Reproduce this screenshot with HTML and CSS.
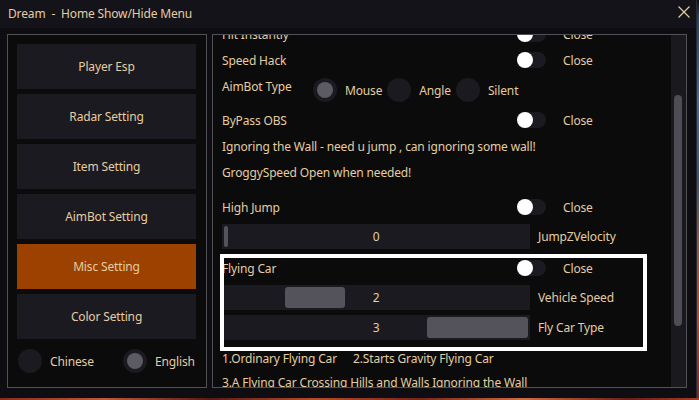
FILE: index.html
```html
<!DOCTYPE html>
<html lang="en">
<head>
    <meta charset="UTF-8">
    <meta name="viewport" content="width=device-width, initial-scale=1.0">
    <title>Dream - Home Show/Hide Menu</title>
    <link rel="stylesheet" href="styles.css">
</head>
<body>
    <div class="window">
        <div class="titlebar">
            <span class="title">Dream  -  Home Show/Hide Menu</span>
            <svg class="close" width="12" height="12" viewBox="0 0 12 12">
                <path d="M0.5 0.5 L11.5 11.5 M11.5 0.5 L0.5 11.5" stroke="#e4cda0" stroke-width="1.2" fill="none"/>
            </svg>
        </div>

        <div class="main">
            <div class="side">
                <div class="nav">
                    <div class="nav-btn">Player Esp</div>
                    <div class="nav-btn">Radar Setting</div>
                    <div class="nav-btn">Item Setting</div>
                    <div class="nav-btn">AimBot Setting</div>
                    <div class="nav-btn active">Misc Setting</div>
                    <div class="nav-btn">Color Setting</div>
                </div>
                <div class="lang">
                    <div class="radio"><span class="dot"></span>Chinese</div>
                    <div class="radio on"><span class="dot"></span>English</div>
                </div>
            </div>

            <div class="content">
                <div class="scroll-area">
                    <div class="list">
                        <div class="row">
                            <span class="label">Hit Instantly</span>
                            <span class="toggle"></span>
                            <span class="state">Close</span>
                        </div>
                        <div class="row">
                            <span class="label">Speed Hack</span>
                            <span class="toggle"></span>
                            <span class="state">Close</span>
                        </div>
                        <div class="row choice">
                            <span class="choice-label">AimBot Type</span>
                            <div class="choices">
                                <div class="radio on"><span class="dot"></span>Mouse</div>
                                <div class="radio"><span class="dot"></span>Angle</div>
                                <div class="radio"><span class="dot"></span>Silent</div>
                            </div>
                        </div>
                        <div class="row">
                            <span class="label">ByPass OBS</span>
                            <span class="toggle"></span>
                            <span class="state">Close</span>
                        </div>
                        <div class="row">Ignoring the Wall - need u jump , can ignoring some wall!</div>
                        <div class="row">GroggySpeed Open when needed!</div>
                        <div class="row spaced">
                            <span class="label">High Jump</span>
                            <span class="toggle"></span>
                            <span class="state">Close</span>
                        </div>
                        <div class="slider-row">
                            <div class="slider">
                                <span class="grab" style="left: 2px; width: 4px;"></span>
                                <span class="value">0</span>
                            </div>
                            <span class="slider-label">JumpZVelocity</span>
                        </div>
                        <div class="row">
                            <span class="label">Flying Car</span>
                            <span class="toggle"></span>
                            <span class="state">Close</span>
                        </div>
                        <div class="slider-row">
                            <div class="slider">
                                <span class="grab" style="left: 63px; width: 60px;"></span>
                                <span class="value">2</span>
                            </div>
                            <span class="slider-label">Vehicle Speed</span>
                        </div>
                        <div class="slider-row">
                            <div class="slider">
                                <span class="grab" style="left: 205px; width: 101px;"></span>
                                <span class="value">3</span>
                            </div>
                            <span class="slider-label">Fly Car Type</span>
                        </div>
                        <div class="note">
                            <span class="note-first">1.Ordinary Flying Car</span>
                            <span>2.Starts Gravity Flying Car</span>
                        </div>
                        <div class="note">3.A Flying Car Crossing Hills and Walls Ignoring the Wall</div>
                    </div>
                </div>
                <div class="scrollbar"><div class="thumb"></div></div>
                <div class="highlight"></div>
            </div>
        </div>
    </div>
</body>
</html>
```

FILE: styles.css
```css
body {
    margin: 0;
    width: 699px;
    height: 400px;
    overflow: hidden;
    font-family: "Noto Sans", "Open Sans", sans-serif;
    letter-spacing: -0.15px;
    background:
        linear-gradient(to right, #8a2a1c 0, #c0583a 15%, #5a1a14 30%, #b84a2a 45%, #7a2418 60%, #d06a40 75%, #6a1e16 90%, #a83a24 100%) bottom / 100% 2px no-repeat,
        linear-gradient(to bottom, #101014 0, #24425e 4%, #4a6a8a 25%, #3a5470 45%, #8a5a3a 60%, #b04a2a 80%, #7a2a1a 100%);
}

.window {
    width: 696px;
    height: 398px;
    border-right: 1px solid #2c2b31;
    background-color: #0e0d12;
    color: #e4cda0;
    display: flex;
    flex-direction: column;
}

.titlebar {
    height: 28px;
    flex: none;
    background-color: #141319;
    display: flex;
    align-items: center;
    justify-content: space-between;
    padding: 0 6px 0 8px;
    font-size: 12px;
}

.title {
    white-space: pre;
    margin-top: -2px;
}

.close {
    margin-top: -5px;
}

.main {
    display: flex;
    gap: 5px;
    padding: 6px 0 0 7px;
}

.side, .content {
    height: 354px;
    box-sizing: border-box;
    border: 1px solid #505055;
    background-color: #0b0b0c;
}

.side {
    width: 200px;
    flex: none;
    padding: 9px 9px 0;
}

.nav {
    display: flex;
    flex-direction: column;
    gap: 5px;
}

.nav-btn {
    width: 179px;
    height: 45px;
    background-color: #1c1a21;
    display: flex;
    align-items: center;
    justify-content: center;
    font-size: 12px;
}

.nav-btn.active {
    background-color: #9c4100;
}

.lang {
    display: flex;
    margin-top: 10px;
    padding-left: 1px;
    font-size: 12px;
}

.lang .radio:first-child {
    width: 105px;
    flex: none;
}

.radio {
    display: flex;
    align-items: center;
    gap: 8px;
}

.dot {
    width: 24px;
    height: 24px;
    flex: none;
    border-radius: 50%;
    background-color: #1c1a21;
    display: flex;
    align-items: center;
    justify-content: center;
}

.radio.on .dot::after {
    content: "";
    width: 16px;
    height: 16px;
    border-radius: 50%;
    background-color: #5c5a62;
}

.content {
    width: 475px;
    flex: none;
    display: flex;
    position: relative;
}

.scroll-area {
    width: 458px;
    overflow: hidden;
    padding-left: 9px;
    box-sizing: border-box;
}

.list {
    margin-top: -15px;
    font-size: 12px;
}

.row {
    height: 24px;
    margin-top: 2px;
    display: flex;
    align-items: center;
    white-space: nowrap;
}

.row.spaced {
    margin-top: 11px;
}

.label {
    width: 295px;
    flex: none;
}

.toggle {
    width: 29px;
    height: 16px;
    flex: none;
    border-radius: 8px;
    background-color: #1c1a21;
    display: flex;
}

.toggle::before {
    content: "";
    width: 16px;
    height: 16px;
    border-radius: 50%;
    background-color: #fff;
}

.state {
    margin-left: 17px;
}

.row.choice {
    height: 32px;
    align-items: flex-start;
}

.choice-label {
    width: 91px;
    flex: none;
    line-height: 26px;
}

.choices {
    display: flex;
    margin-top: 4px;
}

.choices .radio {
    margin-right: 5px;
}

.slider-row {
    margin-top: 5px;
    display: flex;
    align-items: center;
}

.slider-row + .row {
    margin-top: 7px;
}

.slider {
    width: 308px;
    height: 25px;
    position: relative;
    background-color: #1c1a21;
    display: flex;
    align-items: center;
    justify-content: center;
}

.grab {
    position: absolute;
    top: 2px;
    bottom: 2px;
    border-radius: 3px;
    background-color: #54525a;
}

.value {
    position: relative;
}

.slider-label {
    margin-left: 8px;
}

.note {
    height: 24px;
    display: flex;
    align-items: center;
    white-space: nowrap;
}

.slider-row + .note {
    margin-top: 6px;
}

.note-first {
    width: 131px;
}

.scrollbar {
    width: 15px;
    background-color: #1a191e;
    padding: 60px 0 0 3px;
    box-sizing: border-box;
}

.thumb {
    width: 8px;
    height: 231px;
    border-radius: 4px;
    background-color: #4e4c55;
}

.highlight {
    position: absolute;
    left: 7px;
    top: 219px;
    width: 427px;
    height: 97px;
    box-sizing: border-box;
    border: 4px solid #fff;
}
```
